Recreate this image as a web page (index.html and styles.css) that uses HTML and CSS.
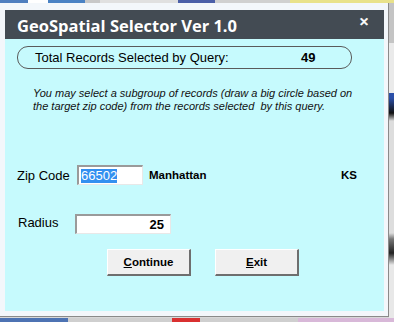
FILE: index.html
```html
<!DOCTYPE html>
<html>
<head>
<meta charset="utf-8">
<link rel="stylesheet" href="styles.css">
</head>
<body>
<div class="desk-top"></div>
<div class="row">
  <div class="window">
    <div class="titlebar">
      <span class="title">GeoSpatial Selector Ver 1.0</span>
      <span class="close">✕</span>
    </div>
    <div class="content">
      <div class="summary">
        <span class="sum-label">Total Records Selected by Query:</span>
        <span class="sum-value">49</span>
      </div>
      <p class="note">You may select a subgroup of records (draw a big circle based on the target zip code) from the records selected&nbsp; by this query.</p>
      <div class="zip-row">
        <span class="label">Zip Code</span>
        <div class="field zip"><span class="sel">66502</span></div>
        <span class="city">Manhattan</span>
        <span class="state">KS</span>
      </div>
      <div class="radius-row">
        <span class="label">Radius</span>
        <div class="field radius">25</div>
      </div>
      <div class="buttons">
        <div class="btn"><u>C</u>ontinue</div>
        <div class="btn"><u>E</u>xit</div>
      </div>
    </div>
  </div>
  <div class="desk-right"></div>
</div>
<div class="desk-bottom"></div>
</body>
</html>
```
FILE: styles.css
```css
html, body {
  margin: 0;
  padding: 0;
  width: 394px;
  height: 322px;
  overflow: hidden;
  background: #d8d8d8;
  font-family: "Liberation Sans", Arial, sans-serif;
}
.desk-top {
  height: 3px;
  background: linear-gradient(to right,
    #4f7fbf 0, #4f7fbf 28px, #ffffff 28px, #ffffff 48px,
    #4a82c4 48px, #4a82c4 85px, #c8c8c8 85px, #c8c8c8 100px,
    #e0e0e0 100px, #e0e0e0 178px, #4b5fa8 178px, #4b5fa8 215px,
    #d0d0d0 215px, #d0d0d0 290px, #e9e28a 290px, #e9e28a 394px);
}
.row {
  display: flex;
  height: 315px;
}
.window {
  width: 389px;
  height: 314px;
  background: #f3f7fb;
  border-right: 1px solid #8a8a8a;
  border-bottom: 1px solid #8a8a8a;
  padding: 7px 4px 0 5px;
  box-sizing: border-box;
  display: flex;
  flex-direction: column;
}
.desk-right {
  flex: 1;
  background: linear-gradient(to bottom,
    #c4c4c4 0, #c4c4c4 40px, #eaeaea 40px, #eaeaea 90px,
    #2b4fa8 90px, #2b4fa8 95px, #111 110px, #ddd 118px, #ddd 230px,
    #777 236px, #222 250px, #e8e8e8 262px, #e8e8e8 315px);
}
.desk-bottom {
  height: 4px;
  background: linear-gradient(to right,
    #4d73b3 0, #4d73b3 68px, #cfcfcf 68px, #cfcfcf 172px,
    #d93030 172px, #d93030 200px, #cfcfcf 200px, #cfcfcf 298px,
    #d8b8d8 298px, #d8b8d8 394px);
}
.titlebar {
  height: 29px;
  background: #434b53;
  display: flex;
  align-items: center;
  padding: 0 15px 0 12px;
  flex: none;
}
.title {
  flex: 1;
  color: #ffffff;
  font-family: "Open Sans", "DejaVu Sans", sans-serif;
  font-weight: 700;
  font-size: 16.5px;
  margin-top: 1px;
}
.close {
  color: #ffffff;
  font-family: "DejaVu Sans", sans-serif;
  font-weight: 700;
  font-size: 12px;
  margin-top: -5px;
  -webkit-text-stroke: 0.6px #ffffff;
}
.content {
  height: 272px;
  background: #c6fafd;
  padding: 7px 0 0 12px;
  box-sizing: border-box;
  display: flex;
  flex-direction: column;
  align-items: flex-start;
}
.summary {
  width: 335px;
  height: 23px;
  box-sizing: border-box;
  border: 1px solid #5a5a5a;
  border-radius: 11px;
  display: flex;
  align-items: center;
  padding-left: 17px;
  font-size: 13px;
  color: #000;
}
.sum-label {
  width: 266px;
}
.sum-value {
  font-weight: 700;
}
.note {
  margin: 18px 0 0 16px;
  width: 335px;
  font-size: 11px;
  line-height: 13px;
  font-style: italic;
  color: #111;
}
.zip-row {
  margin-top: 52px;
  display: flex;
  align-items: center;
  font-size: 13px;
  width: 340px;
}
.label {
  color: #000;
}
.zip-row .label {
  width: 60px;
}
.field {
  height: 20px;
  box-sizing: border-box;
  background: #fff;
  border-style: solid;
  border-width: 2px 1px 1px 2px;
  border-color: #9a9a9a #e8e8e8 #e8e8e8 #9a9a9a;
  font-size: 13px;
  display: flex;
  align-items: center;
}
.zip {
  width: 66px;
  padding-left: 2px;
}
.sel {
  background: #3390f0;
  color: #fff;
  line-height: 14px;
}
.city {
  margin-left: 6px;
  font-weight: 700;
  font-size: 11.5px;
  flex: 1;
}
.state {
  font-weight: 700;
  font-size: 11.5px;
}
.radius-row {
  margin-top: 29px;
  display: flex;
  align-items: center;
  font-size: 13px;
}
.radius-row .label {
  width: 57px;
  margin-left: 1px;
  margin-top: -4px;
}
.radius {
  width: 96px;
  justify-content: flex-end;
  padding-right: 6px;
  font-weight: 700;
}
.buttons {
  margin: 15px 0 0 90px;
  display: flex;
  gap: 24px;
}
.btn {
  width: 84px;
  height: 27px;
  box-sizing: border-box;
  background: #f0f0f0;
  border-style: solid;
  border-width: 1px 2px 2px 1px;
  border-color: #ffffff #6e6e6e #6e6e6e #ffffff;
  display: flex;
  align-items: center;
  justify-content: center;
  font-weight: 700;
  font-size: 11.5px;
  color: #000;
}
```
